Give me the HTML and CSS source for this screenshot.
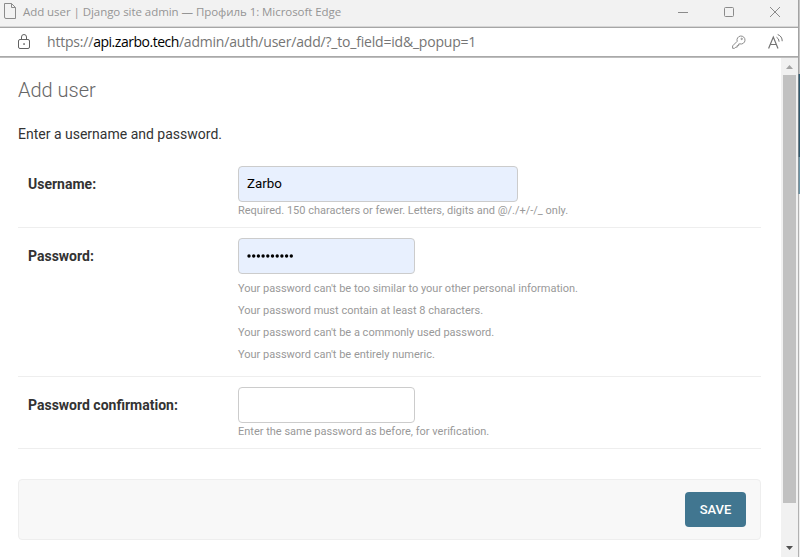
FILE: index.html
```
<!DOCTYPE html>
<html lang="en">
<head>
<meta charset="utf-8">
<title>Add user | Django site admin</title>
<link rel="stylesheet" href="styles.css">
</head>
<body>
<div class="window">
  <header class="titlebar">
    <svg class="page-icon" width="14" height="18" viewBox="0 0 14 18"><path d="M1.500 1.500h7l4 4v11h-9.500a1.500 1.500 0 0 1-1.500-1.500zM8.500 1.500v4h4"/></svg>
    <span class="window-title">Add user | Django site admin — Профиль 1: Microsoft Edge</span>
    <div class="controls">
      <svg width="12" height="12" viewBox="0 0 12 12"><path d="M1 6.500h10"/></svg>
      <svg width="12" height="12" viewBox="0 0 12 12"><rect x="1.500" y="1.500" width="9" height="9" rx="1"/></svg>
      <svg width="12" height="12" viewBox="0 0 12 12"><path d="M1 1l10 10M11 1L1 11"/></svg>
    </div>
  </header>
  <div class="address">
    <svg class="lock" width="14" height="18" viewBox="0 0 14 18"><rect x="1.500" y="6.500" width="11" height="9" rx="1.500"/><path d="M4.500 6.500V4a2.500 2.500 0 0 1 5 0v2.500"/><rect class="dot" x="6.300" y="10.300" width="1.500" height="1.500"/></svg>
    <span class="url">https://<b>api.zarbo.tech</b>/admin/auth/user/add/?_to_field=id&amp;_popup=1</span>
    <svg class="key" width="16" height="16" viewBox="0 0 16 16"><path d="M6.200 7.300A4 4 0 1 1 9 9.900L7.700 10v1.600H6.200v1.500H4.800L3.600 14.300H1.600v-2.400z"/><circle cx="10.700" cy="4.900" r=".7"/></svg>
    <svg class="read" width="18" height="18" viewBox="0 0 18 18"><path d="M1.600 15.500L6.300 4l4.700 11.500M3.200 11.500h6.200"/><path class="waves" d="M9.500 4.200q2.600 1.300 2.600 4.500M10.700 1.500q4.600 1.800 4.500 6.700"/></svg>
  </div>
  <div class="viewport">
    <main class="page">
      <h1>Add user</h1>
      <p class="intro">Enter a username and password.</p>
      <form>
        <div class="row">
          <label>Username:</label>
          <div class="control"><div class="field wide filled">Zarbo</div><p class="help">Required. 150 characters or fewer. Letters, digits and @/./+/-/_ only.</p></div>
        </div>
        <div class="row password">
          <label>Password:</label>
          <div class="control">
            <div class="field filled"><svg class="dots" width="48" height="6" viewBox="0 0 48 6"><path d="M2 3h44"/></svg></div>
            <ul class="rules">
              <li>Your password can't be too similar to your other personal information.</li>
              <li>Your password must contain at least 8 characters.</li>
              <li>Your password can't be a commonly used password.</li>
              <li>Your password can't be entirely numeric.</li>
            </ul>
          </div>
        </div>
        <div class="row">
          <label>Password confirmation:</label>
          <div class="control"><div class="field"></div><p class="help">Enter the same password as before, for verification.</p></div>
        </div>
        <div class="submit"><button type="button">SAVE</button></div>
      </form>
    </main>
    <div class="scrollbar">
      <svg class="up" width="17" height="17" viewBox="0 0 17 17"><path d="M5 11l3.500-4 3.500 4z"/></svg>
      <div class="thumb"></div>
      <svg class="down" width="17" height="17" viewBox="0 0 17 17"><path d="M5 6l3.500 4L12 6z"/></svg>
    </div>
  </div>
</div>
<div class="backdrop"></div>
</body>
</html>
```

FILE: styles.css
```
* { box-sizing: border-box; }
body { margin: 0; width: 800px; height: 557px; display: flex; overflow: hidden; background: #fff; font-family: Roboto, sans-serif; }
svg { display: block; flex: none; fill: none; stroke: #8b8b8b; }
.window { width: 798px; height: 557px; display: flex; flex-direction: column; }
.titlebar { height: 28px; padding: 0 17px 4px 3px; display: flex; align-items: center; background: #f2f2f2; border-bottom: 1px solid #a6a6a6; box-shadow: inset 0 -1px #d6d6d6; }
.page-icon { margin: -1px 6px 0 0; }
.window-title { flex: 1; font: 11.5px "Open Sans", sans-serif; letter-spacing: -.055px; color: #959595; white-space: nowrap; }
.controls { display: flex; gap: 34px; }
.address { height: 30px; padding: 0 13px 2px 17px; display: flex; align-items: center; border-bottom: 1px solid #bebebe; box-shadow: inset 0 -1px #a9a9a9; }
.lock { stroke: #626262; }
.lock .dot { fill: #555; stroke: none; }
.url { flex: 1; margin-left: 16px; font: 14px "Open Sans", sans-serif; letter-spacing: -.2px; color: #757575; white-space: nowrap; }
.url b { font-weight: 400; letter-spacing: -.48px; color: #000; }
.key { margin-right: 20px; }
.read { stroke: #747474; stroke-width: 1.2; }
.read .waves { stroke-width: 1; }
.viewport { flex: 1; display: flex; min-height: 0; }
.page { flex: 1; padding: 20px 20px 0 18px; }
h1 { margin: 0; font-size: 20px; line-height: 24px; font-weight: 300; color: #666; }
.intro { margin: 22px 0 12px; font-size: 14px; line-height: 20px; color: #333; }
.row { display: flex; height: 72px; padding: 10px; border-bottom: 1px solid #eee; }
.row.password { height: 149px; }
label { width: 210px; padding-top: 8px; font-size: 14px; line-height: 20px; font-weight: 700; color: #333; }
.field { display: flex; align-items: center; width: 177px; height: 36px; padding: 0 8px 1px; border: 1px solid #ccc; border-radius: 4px; background: #fff; font-size: 13.33px; color: #000; }
.field.wide { width: 280px; }
.filled { background: #e8f0fe; }
.dots { margin-top: 0; stroke: #000; stroke-width: 3.4; stroke-linecap: round; stroke-dasharray: 0 4.700; }
.help { margin: 0; font-size: 11px; line-height: 18px; color: #999; white-space: nowrap; }
.rules { list-style: none; margin: 4px 0 0; padding: 0; font-size: 11px; line-height: 22px; color: #999; }
.submit { height: 61px; margin-top: 30px; padding: 0 14px; display: flex; align-items: center; justify-content: flex-end; background: #f8f8f8; border: 1px solid #eee; border-radius: 4px; }
button { width: 61px; height: 35px; padding: 0; border: 0; border-radius: 4px; background: #417690; color: #fff; font: 500 13px Roboto, sans-serif; }
.scrollbar { width: 17px; background: #f1f1f1; display: flex; flex-direction: column; }
.thumb { width: 13px; height: 428px; margin: 0 auto; background: #c1c1c1; }
.scrollbar svg { stroke: none; }
.up { fill: #a3a3a3; }
.down { fill: #505050; margin-top: auto; }
.backdrop { width: 2px; height: 557px; border-left: 1px solid rgba(145, 145, 145, .65); background: linear-gradient(#c5c5c5 0 74px, #315b70 74px 157px, #6d96a8 157px 194px, #eee 194px); }
```
